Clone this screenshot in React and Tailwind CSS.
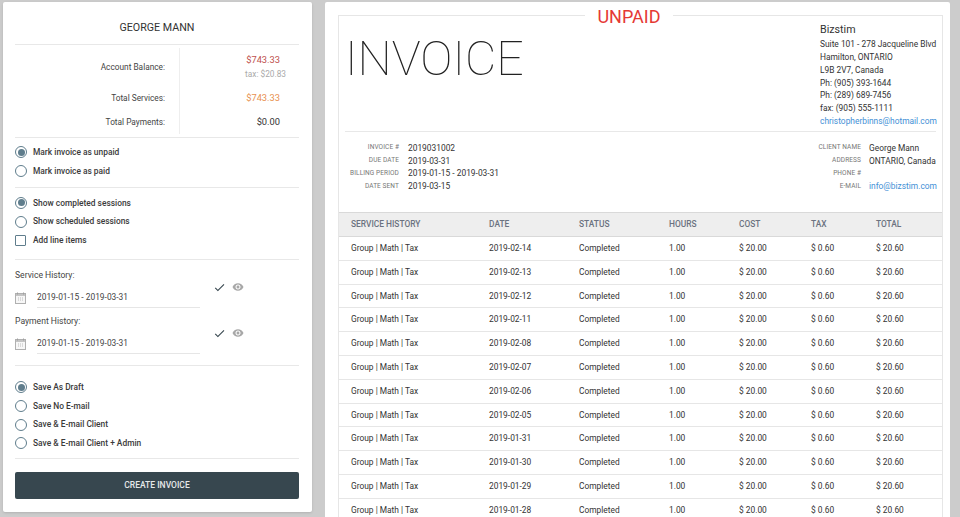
import React from 'react';
import { MdCheck, MdRemoveRedEye } from 'react-icons/md';

const addressLines = [
  'Suite 101 - 278 Jacqueline Blvd',
  'Hamilton, ONTARIO',
  'L9B 2V7, Canada',
  'Ph: (905) 393-1644',
  'Ph: (289) 689-7456',
  'fax: (905) 555-1111',
];

const invoiceDetails = [
  ['INVOICE #', '2019031002'],
  ['DUE DATE', '2019-03-31'],
  ['BILLING PERIOD', '2019-01-15 - 2019-03-31'],
  ['DATE SENT', '2019-03-15'],
];

const clientDetails = [
  ['CLIENT NAME', 'George Mann'],
  ['ADDRESS', 'ONTARIO, Canada'],
  ['PHONE #', ''],
  ['E-MAIL', 'info@bizstim.com'],
];

const sessionDates = [
  '2019-02-14', '2019-02-13', '2019-02-12', '2019-02-11', '2019-02-08', '2019-02-07',
  '2019-02-06', '2019-02-05', '2019-01-31', '2019-01-30', '2019-01-29', '2019-01-28',
];

const columns = 'grid grid-cols-[138px_90px_90px_70px_72px_65px_1fr] pl-[12px] items-center';

const Radio = ({ checked, label }) => (
  <div className="flex items-center h-[18.7px]">
    <span className="flex items-center justify-center w-3 h-3 rounded-full border border-[#5f7d8c]">
      {checked && <span className="w-[7px] h-[7px] rounded-full bg-[#5f7d8c]" />}
    </span>
    <span className="ml-[6px] text-[8.4px] font-medium text-[#3a3a3a]">{label}</span>
  </div>
);

const Divider = ({ className = '' }) => <div className={`h-px bg-[#e8e8e8] ${className}`} />;

const CalendarIcon = () => (
  <svg width="11" height="12" viewBox="0 0 11 12" fill="none" className="shrink-0">
    <rect x="0.5" y="1.5" width="10" height="10" fill="#f7f7f7" stroke="#b0b0b0" />
    <rect x="1" y="2" width="9" height="2" fill="#c4c4c4" />
    <path d="M2.5 0.5v2M8.5 0.5v2" stroke="#a0a0a0" />
    <path d="M3 6h5M3 8h5" stroke="#bdbdbd" strokeDasharray="1 1" />
  </svg>
);

const DateFilter = ({ label }) => (
  <div className="h-[46px]">
    <div className="text-[8.6px] leading-[11px] text-[#444] pt-[4px]">{label}</div>
    <div className="flex mt-[6px]">
      <div className="flex items-center w-[185px]">
        <CalendarIcon />
        <div className="ml-[11px] w-[163px] h-[21px] flex items-center border-b border-[#e6e6e6] text-[8.4px] text-[#444]">
          2019-01-15 - 2019-03-31
        </div>
      </div>
      <div className="flex items-center gap-[6px] ml-[13px] -mt-[21px]">
        <MdCheck className="text-[13px] text-[#37474f]" />
        <MdRemoveRedEye className="text-[12px] text-[#a8a8a8]" />
      </div>
    </div>
  </div>
);

const SummaryRow = ({ label, className = '', children }) => (
  <div className={`flex items-center ${className}`}>
    <div className="w-[150px] text-right text-[8.3px] text-[#444]">{label}</div>
    <div className="flex-1 pr-[19px] text-right">{children}</div>
  </div>
);

const LabelValue = ({ label, value, labelWidth, valueWidth, gap, link }) => (
  <div className="flex items-center h-[12.9px]">
    <div style={{ width: labelWidth, marginRight: gap, flexShrink: 0 }} className="text-right text-[6.5px] text-[#777] tracking-[0.1px] whitespace-nowrap">
      {label}
    </div>
    <div style={{ width: valueWidth }} className={`text-[8.4px] whitespace-nowrap ${link ? 'text-[#3f8fd6]' : 'text-[#333]'}`}>{value}</div>
  </div>
);

export default function App() {
  return (
    <div className="flex items-start h-[517px] overflow-hidden bg-[#cccccc] font-['Roboto',sans-serif]">
      {/* options panel */}
      <aside className="w-[309px] h-[510px] mt-[2px] ml-[3px] shrink-0 rounded-[2px] bg-white shadow-sm pl-3 pr-[13px]">
        <div className="h-[42px] pt-[19px] text-center text-[10.7px] leading-[14px] text-[#333]">GEORGE MANN</div>
        <Divider />
        <div className="flex relative h-[92px]">
          <div className="absolute left-[164px] top-[3px] bottom-[3px] w-px bg-[#eeeeee]" />
          <div className="flex-1 pt-[4px]">
            <SummaryRow label="Account Balance:" className="h-[36px]">
              <div className="text-[9.3px] leading-[14px] text-[#c0504d]">$743.33</div>
              <div className="text-[8.3px] leading-[14px] text-[#aaaaaa] -mr-[6px]">tax: $20.83</div>
            </SummaryRow>
            <SummaryRow label="Total Services:" className="h-[24px] mt-[1px]">
              <div className="text-[9.3px] text-[#e8914f]">$743.33</div>
            </SummaryRow>
            <SummaryRow label="Total Payments:" className="h-[24px]">
              <div className="text-[9.3px] text-[#333]">$0.00</div>
            </SummaryRow>
          </div>
        </div>
        <Divider />
        <div className="h-[49px] pt-[5px]">
          <Radio checked label="Mark invoice as unpaid" />
          <Radio label="Mark invoice as paid" />
        </div>
        <Divider />
        <div className="h-[71px] pt-[5.5px]">
          <Radio checked label="Show completed sessions" />
          <Radio label="Show scheduled sessions" />
          <div className="flex items-center h-[18.7px]">
            <span className="w-[11px] h-[11px] rounded-[1px] border border-[#5f7d8c]" />
            <span className="ml-[7px] text-[8.4px] font-medium text-[#3a3a3a]">Add line items</span>
          </div>
        </div>
        <Divider />
        <div className="h-[105px] pt-[6px]">
          <DateFilter label="Service History:" />
          <DateFilter label="Payment History:" />
        </div>
        <Divider />
        <div className="h-[92px] pt-[12px]">
          <Radio checked label="Save As Draft" />
          <Radio label="Save No E-mail" />
          <Radio label="Save & E-mail Client" />
          <Radio label="Save & E-mail Client + Admin" />
        </div>
        <Divider />
        <button className="mt-[13px] w-full h-[27px] rounded-[2px] bg-[#37474f] text-[8.5px] font-medium text-[#e6e9ea]">
          CREATE INVOICE
        </button>
      </aside>

      {/* invoice preview */}
      <main className="w-[625px] h-[530px] mt-[2px] ml-[13px] shrink-0 rounded-[2px] bg-white pl-[13px] pr-[7px] pt-[13px]">
        <div className="relative border border-[#e6e6e6] h-[520px]">
          <div className="absolute left-[246px] -top-[9px] w-[88px] bg-white text-center text-[18px] leading-[20px] text-[#e53935]">
            UNPAID
          </div>
          <div className="flex justify-between h-[115px] pl-[6px]">
            <div className="text-[48.3px] leading-[58px] font-thin text-[#222] pt-[14px]">INVOICE</div>
            <div className="w-[122px] pt-[7px]">
              <div className="text-[10.7px] leading-[14px] text-[#333] mb-[1px]">Bizstim</div>
              {addressLines.map((line) => (
                <div key={line} className="text-[8.4px] leading-[12.85px] text-[#333] whitespace-nowrap">{line}</div>
              ))}
              <div className="text-[8.4px] leading-[12.85px] text-[#3f8fd6] whitespace-nowrap">christopherbinns@hotmail.com</div>
            </div>
          </div>
          <Divider className="mx-[6px]" />
          <div className="flex justify-between h-[80px] pt-[9.5px]">
            <div>
              {invoiceDetails.map(([label, value]) => (
                <LabelValue key={label} label={label} value={value} labelWidth={60} gap={9} />
              ))}
            </div>
            <div className="pr-[5px]">
              {clientDetails.map(([label, value]) => (
                <LabelValue key={label} label={label} value={value} labelWidth={45} valueWidth={68} gap={8} link={label === 'E-MAIL'} />
              ))}
            </div>
          </div>
          <div className={`${columns} h-[25px] bg-[#eeeeee] border-t border-b border-[#d9d9d9] text-[8.4px] font-medium text-[#6b7280]`}>
            <div>SERVICE HISTORY</div>
            <div>DATE</div>
            <div>STATUS</div>
            <div>HOURS</div>
            <div>COST</div>
            <div>TAX</div>
            <div>TOTAL</div>
          </div>
          {sessionDates.map((date) => (
            <div key={date} className={`${columns} h-[23.8px] border-b border-[#e6e6e6] text-[8.4px] text-[#333]`}>
              <div>Group | Math | Tax</div>
              <div>{date}</div>
              <div>Completed</div>
              <div>1.00</div>
              <div>$ 20.00</div>
              <div>$ 0.60</div>
              <div>$ 20.60</div>
            </div>
          ))}
        </div>
      </main>
    </div>
  );
}
